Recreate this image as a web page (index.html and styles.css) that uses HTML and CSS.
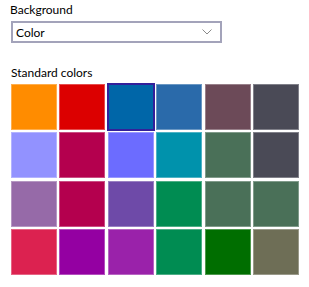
FILE: index.html
```html
<!DOCTYPE html>
<html lang="en">
<head>
    <meta charset="UTF-8">
    <title>Background</title>
    <link rel="stylesheet" href="styles.css">
</head>
<body>
    <div class="panel">
        <label class="field-label">Background</label>
        <div class="select-box">
            <span class="select-value">Color</span>
            <svg class="select-arrow" width="10" height="6" viewBox="0 0 10 6">
                <path d="M0.5 0.5 L5 5 L9.5 0.5" fill="none" stroke="#8a8a8a" stroke-width="1"/>
            </svg>
        </div>

        <h3 class="section-title">Standard colors</h3>
        <div class="swatch-grid">
            <div class="swatch" style="background:#ff8c00"></div>
            <div class="swatch" style="background:#dc0000"></div>
            <div class="swatch selected" style="background:#0066a8"></div>
            <div class="swatch" style="background:#2a6aaa"></div>
            <div class="swatch" style="background:#6c4a58"></div>
            <div class="swatch" style="background:#4a4a56"></div>

            <div class="swatch" style="background:#9292ff"></div>
            <div class="swatch" style="background:#b4004e"></div>
            <div class="swatch" style="background:#6c6cff"></div>
            <div class="swatch" style="background:#0092ac"></div>
            <div class="swatch" style="background:#4a7058"></div>
            <div class="swatch" style="background:#4a4a56"></div>

            <div class="swatch" style="background:#966aa8"></div>
            <div class="swatch" style="background:#b4004e"></div>
            <div class="swatch" style="background:#6e4aa8"></div>
            <div class="swatch" style="background:#008c52"></div>
            <div class="swatch" style="background:#4a7058"></div>
            <div class="swatch" style="background:#4a7058"></div>

            <div class="swatch" style="background:#dc2250"></div>
            <div class="swatch" style="background:#9400a2"></div>
            <div class="swatch" style="background:#9a22aa"></div>
            <div class="swatch" style="background:#008c52"></div>
            <div class="swatch" style="background:#006e00"></div>
            <div class="swatch" style="background:#6e6e56"></div>
        </div>
    </div>
</body>
</html>
```

FILE: styles.css
```css
body {
    font-family: 'Lato', 'Noto Sans', sans-serif;
    margin: 0;
    padding: 0;
    background: #ffffff;
    color: #000000;
}

.panel {
    padding: 2px 11px 0 11px;
}

.field-label {
    display: block;
    font-size: 12px;
    line-height: 16px;
    margin-bottom: 3px;
    margin-left: -1px;
}

.select-box {
    width: 211px;
    height: 22px;
    box-sizing: border-box;
    border: 2px solid #a3a3ba;
    display: flex;
    align-items: center;
    justify-content: space-between;
    padding: 0 8px 0 3px;
}

.select-value {
    font-size: 12px;
}

.select-arrow {
    display: block;
}

.section-title {
    font-size: 12px;
    font-weight: normal;
    line-height: 16px;
    margin: 22px 0 3px 0;
}

.swatch-grid {
    display: grid;
    grid-template-columns: repeat(6, 46px);
    grid-auto-rows: 46px;
    gap: 2.4px;
}

.swatch {
    box-sizing: border-box;
    border: 1px solid rgba(255, 255, 255, 0.3);
}

.swatch.selected {
    margin: -1px;
    border: 2px solid #33209a;
}
```
